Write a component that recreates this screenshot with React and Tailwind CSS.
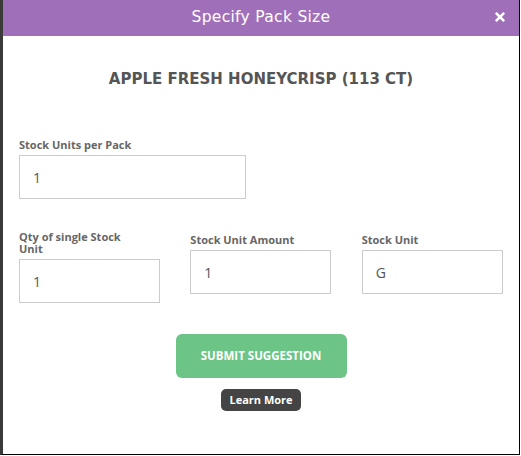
import React from 'react'
import { FaTimes } from 'react-icons/fa'

const Field = ({ label, value, className = '', labelClass = '' }) => (
  <div className={`flex flex-col ${className}`}>
    <label className={`text-[11px] font-bold text-[#666] leading-[12px] mb-[4px] ${labelClass}`}>{label}</label>
    <div className="h-[44px] border border-[#ccc] flex items-center pl-[13px] text-[14px] text-[#555]">
      {value}
    </div>
  </div>
)

const App = () => {
  return (
    <div className="w-[521px] h-[456px] bg-white" style={{ fontFamily: '"Open Sans", sans-serif' }}>
      <div className="w-[520px] h-[455px] border-l-[3px] border-l-[#3a3a3a] border-r border-b border-r-black border-b-black flex flex-col">
        {/* Header */}
        <div className="relative h-[36px] bg-[#a06fb9] flex items-center justify-center">
          <span className="text-white text-[15.5px] tracking-[0.3px]" style={{ fontFamily: '"DejaVu Sans", sans-serif' }}>
            Specify Pack Size
          </span>
          <FaTimes className="absolute right-[12px] top-[10px] text-white w-[14px] h-[14px]" />
        </div>

        <div className="flex flex-col px-[16px]">
          <h2
            className="text-center font-bold text-[15px] text-[#555] mt-[33px] leading-[20px]"
            style={{ fontFamily: '"DejaVu Sans", sans-serif' }}
          >
            APPLE FRESH HONEYCRISP (113 CT)
          </h2>

          <Field label="Stock Units per Pack" value="1" className="w-[227px] mt-[50px]" />

          <div className="flex gap-[30px] mt-[32px]">
            <Field label="Qty of single Stock Unit" value="1" className="w-[142px]" labelClass="pr-[20px]" />
            <Field label="Stock Unit Amount" value="1" className="w-[141px] mt-[3px]" />
            <Field label="Stock Unit" value="G" className="w-[142px] ml-[1px] mt-[3px]" />
          </div>

          <div className="flex flex-col items-center mt-[31px]">
            <button className="w-[171px] h-[44px] rounded-[6px] bg-[#6cc486] text-white text-[11.5px] font-bold">
              SUBMIT SUGGESTION
            </button>
            <button className="mt-[11px] w-[80px] h-[22px] rounded-[5px] bg-[#444] text-white text-[11px] font-bold">
              Learn More
            </button>
          </div>
        </div>
      </div>
    </div>
  )
}

export default App
